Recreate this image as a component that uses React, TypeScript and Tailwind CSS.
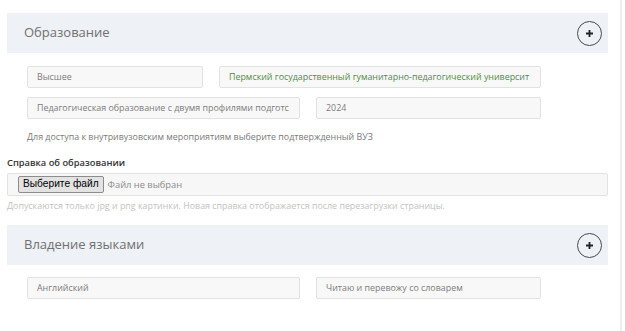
const font = { fontFamily: '"Open Sans", "Liberation Sans", sans-serif' }

const PlusButton = () => (
  <div className="flex h-[25px] w-[25px] items-center justify-center rounded-full border border-[#4a4a4a]">
    <svg width="9" height="9" viewBox="0 0 9 9">
      <path d="M4.5 1v7M1 4.5h7" stroke="#222" strokeWidth="1.8" />
    </svg>
  </div>
)

const SectionHeader = ({ title }: { title: string }) => (
  <div className="flex h-[40px] items-center justify-between bg-[#eef1f5] pl-[17px] pr-[6px]">
    <span className="text-[13px] text-[#707070]">{title}</span>
    <PlusButton />
  </div>
)

const Field = ({ value, width, green = false }: { value: string; width: string; green?: boolean }) => (
  <div
    className={`flex h-[22px] items-center overflow-hidden whitespace-nowrap rounded-[2px] border border-[#e2e2e2] bg-[#f8f8f8] pl-[9px] text-[8.9px] ${width} ${green ? 'text-[#548c40]' : 'text-[#7c7c7c]'}`}
  >
    {value}
  </div>
)

export default function App() {
  return (
    <div className="flex h-[331px] w-[625px] bg-white" style={font}>
      <div className="w-[620px] pl-[7px] pr-[12px] pt-[13px]">
        <SectionHeader title="Образование" />

        <div className="pl-[20px]">
          <div className="mt-[13px] flex gap-[16px]">
            <Field value="Высшее" width="w-[176px]" />
            <Field value="Пермский государственный гуманитарно-педагогический университ" width="w-[322px]" green />
          </div>
          <div className="mt-[9px] flex gap-[16px]">
            <Field value="Педагогическая образование с двумя профилями подготс" width="w-[273px]" />
            <Field value="2024" width="w-[225px]" />
          </div>
          <p className="mt-[11px] text-[8.9px] leading-[13px] text-[#7a7a7a]">
            Для доступа к внутривузовским мероприятиям выберите подтвержденный ВУЗ
          </p>
        </div>

        <p className="mt-[13px] text-[9.3px] font-semibold leading-[14px] text-[#333]">Справка об образовании</p>
        <div className="mt-[3px] flex h-[23px] items-center rounded-[2px] border border-[#e2e2e2] bg-[#f7f7f7] pl-[10px]">
          <button
            type="button"
            className="h-[17px] rounded-[2px] border border-[#8c8c8c] bg-[#e3e3e3] px-[4px] text-[10.2px] leading-none text-black"
            style={{ fontFamily: '"Liberation Sans", Arial, sans-serif' }}
          >
            Выберите файл
          </button>
          <span className="ml-[4px] text-[9.3px] text-[#8a8a8a]">Файл не выбран</span>
        </div>
        <p className="mt-[4px] text-[8.9px] leading-[12px] text-[#c2c2c2]">
          Допускаются только jpg и png картинки. Новая справка отображается после перезагрузки страницы.
        </p>

        <div className="mt-[13px]">
          <SectionHeader title="Владение языками" />
        </div>

        <div className="mt-[12px] flex gap-[16px] pl-[20px]">
          <Field value="Английский" width="w-[273px]" />
          <Field value="Читаю и перевожу со словарем" width="w-[225px]" />
        </div>
      </div>
      <div className="w-[2px] bg-[#efefef]" />
    </div>
  )
}
